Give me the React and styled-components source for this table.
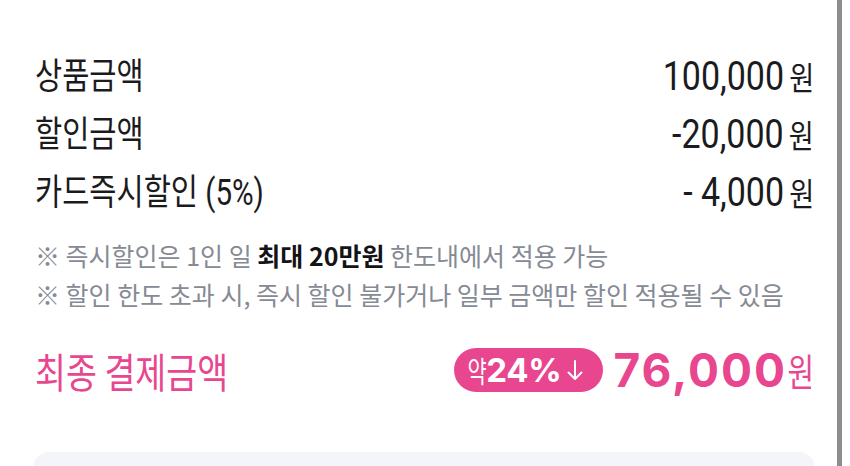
import styled, { createGlobalStyle } from 'styled-components';

const GlobalStyle = createGlobalStyle`
  html, body { margin: 0; padding: 0; background: #fff; overflow: hidden; }
  body { font-family: "Roboto", "Noto Sans CJK KR", sans-serif; }
`;

const PINK = '#e8478f';

const Page = styled.div`
  display: flex;
  width: 850px;
  height: 466px;
  overflow: hidden;
  background: #fff;
`;

const Sheet = styled.div`
  flex: 0 0 837px;
  box-sizing: border-box;
  padding: 48px 23px 0 35px;
  display: flex;
  flex-direction: column;

  & > * {
    flex-shrink: 0;
  }
`;

// 오른쪽 회색 테두리
const Edge = styled.div`
  flex: 0 0 5px;
  background: #8d8d8d;
`;

const Row = styled.div`
  display: flex;
  justify-content: space-between;
  align-items: center;
  height: 58px;
  margin-top: ${p => p.$gap || 0}px;
`;

// 좁은 글꼴처럼 보이도록 가로로 눌러줌
const Narrow = styled.span`
  display: inline-block;
  white-space: nowrap;
  line-height: 1;
  transform: scaleX(${p => p.$k || 0.8});
  transform-origin: ${p => (p.$end ? 'right' : 'left')} center;
`;

const Label = styled(Narrow)`
  font-size: 36px;
  color: #1b1b1d;
`;

const Amount = styled(Narrow)`
  font-family: "Roboto", "Noto Sans CJK KR", sans-serif;
  font-size: 40px;
  color: #1b1b1d;
`;

const Unit = styled.span`
  font-family: "Noto Sans CJK KR", sans-serif;
  font-size: 32px;
  margin-left: 6px;
`;

const Notes = styled.div`
  margin-top: 14px;
`;

const Note = styled.p`
  margin: 0;
  font-family: "Noto Sans CJK KR", sans-serif;
  font-size: 25px;
  line-height: 39px;
  color: #868a94;
  white-space: nowrap;

  strong {
    color: #141416;
    font-weight: 700;
  }
`;

const FinalLabel = styled(Narrow)`
  font-family: "Noto Sans CJK KR", sans-serif;
  font-size: 41px;
  color: ${PINK};
`;

const PriceGroup = styled.div`
  display: flex;
  align-items: center;
  gap: 10px;
`;

const Badge = styled.div`
  display: inline-flex;
  align-items: center;
  height: 44px;
  box-sizing: border-box;
  padding: 0 19px 0 6px;
  border-radius: 22px;
  background: ${PINK};
  color: #fff;
`;

const BadgeWord = styled(Narrow)`
  font-family: "Noto Sans CJK KR", sans-serif;
  font-size: 29px;
`;

const BadgeRate = styled.span`
  font-family: "Inter", sans-serif;
  font-weight: 700;
  font-size: 33px;
  line-height: 1;
  letter-spacing: -0.3px;
`;

const Arrow = styled.svg`
  width: 18px;
  height: 22px;
  margin-left: 5px;
`;

const Price = styled.div`
  display: flex;
  align-items: center;
  color: ${PINK};
`;

const PriceNum = styled.span`
  font-family: "Inter", sans-serif;
  font-weight: 700;
  font-size: 46px;
  line-height: 1;
  letter-spacing: 2px;
`;

const PriceUnit = styled(Narrow)`
  font-family: "Noto Sans CJK KR", sans-serif;
  font-size: 38px;
  margin-left: -8px;
`;

const InfoBox = styled.div`
  margin: 53px -1px 0 -2px;
  height: 60px;
  border-radius: 16px 16px 0 0;
  background: #f4f5f8;
`;

const lines = [
  { label: '상품금액', amount: '100,000' },
  { label: '할인금액', amount: '-20,000' },
  { label: '카드즉시할인 (5%)', amount: '- 4,000' },
];

export default function App() {
  return (
    <>
      <GlobalStyle />
      <Page>
        <Sheet>
          {lines.map(l => (
            <Row key={l.label}>
              <Label $k={0.82}>{l.label}</Label>
              <Amount $end $k={0.85}>
                {l.amount}
                <Unit>원</Unit>
              </Amount>
            </Row>
          ))}

          <Notes>
            <Note>
              ※ 즉시할인은 1인 일 <strong>최대 20만원</strong> 한도내에서 적용 가능
            </Note>
            <Note>※ 할인 한도 초과 시, 즉시 할인 불가거나 일부 금액만 할인 적용될 수 있음</Note>
          </Notes>

          <Row $gap={27}>
            <FinalLabel $k={0.82}>최종 결제금액</FinalLabel>
            <PriceGroup>
              <Badge>
                <BadgeWord $end $k={0.72}>약</BadgeWord>
                <BadgeRate>24%</BadgeRate>
                <Arrow viewBox="0 0 18 22" fill="none" stroke="#fff" strokeWidth="2" strokeLinecap="round" strokeLinejoin="round">
                  <path d="M9 2v18M2.5 13.5L9 20l6.5-6.5" />
                </Arrow>
              </Badge>
              <Price>
                <PriceNum>76,000</PriceNum>
                <PriceUnit $end $k={0.76}>원</PriceUnit>
              </Price>
            </PriceGroup>
          </Row>

          <InfoBox />
        </Sheet>
        <Edge />
      </Page>
    </>
  );
}
